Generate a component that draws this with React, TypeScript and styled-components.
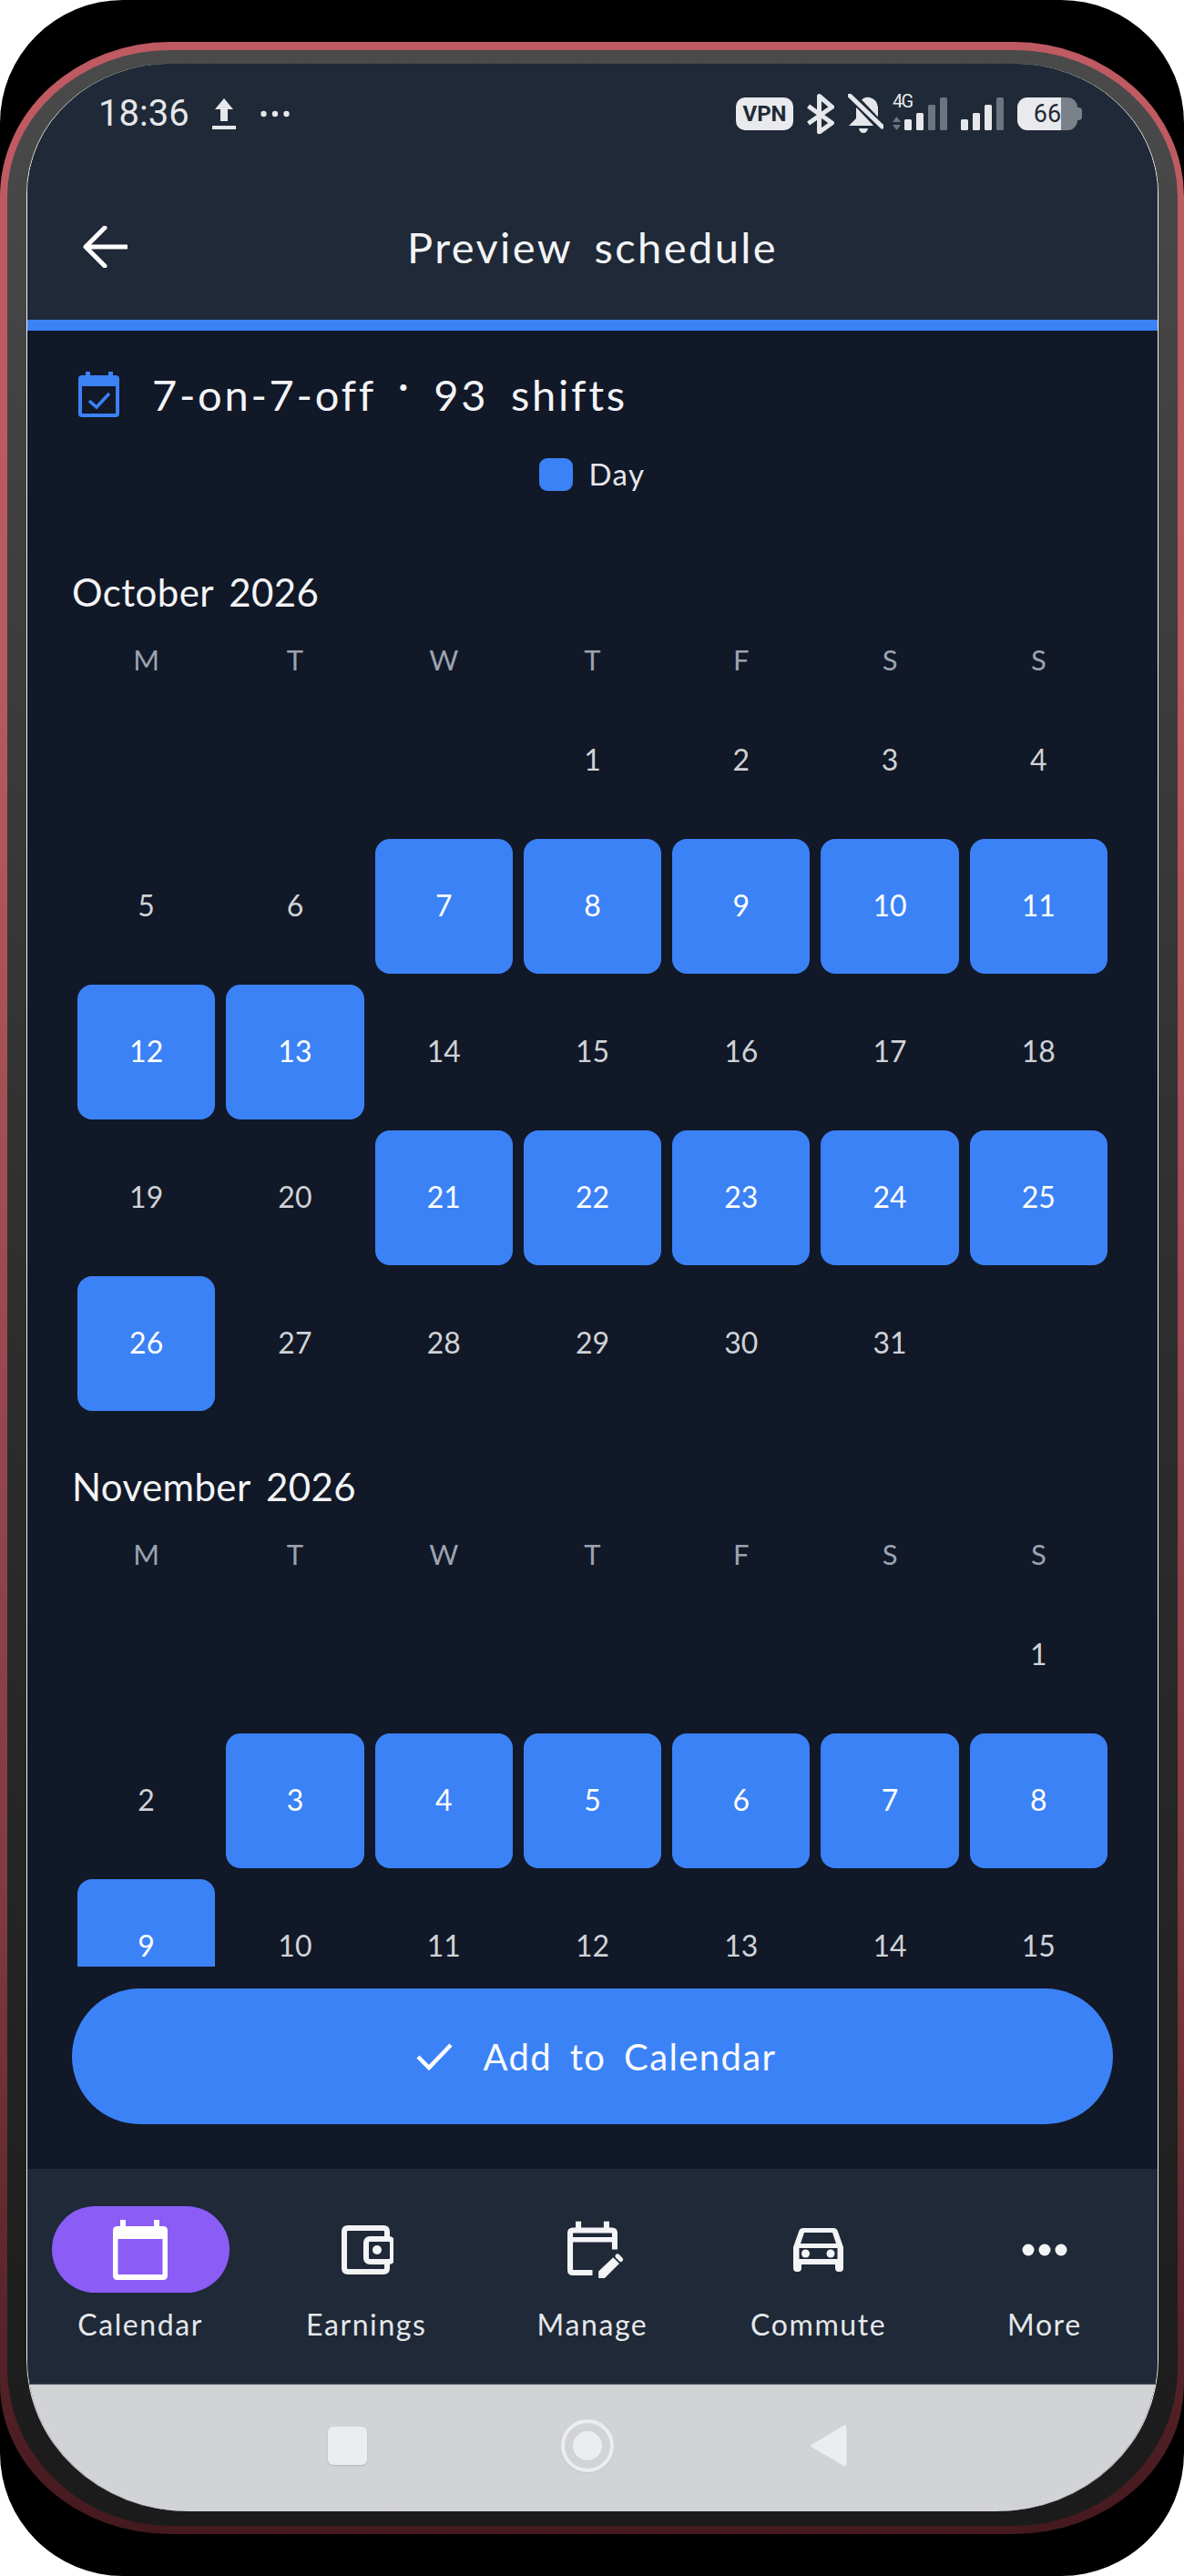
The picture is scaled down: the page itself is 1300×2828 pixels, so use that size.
import React from "react";
import styled, { createGlobalStyle } from "styled-components";

const FONT = `Lato, "Noto Sans", sans-serif`;

const Global = createGlobalStyle`
  html, body { margin: 0; padding: 0; background: #fff; }
  * { box-sizing: border-box; }
`;

const Page = styled.div`
  width: 1300px;
  height: 2828px;
  padding: 46px 0;
  background: #000;
  border-radius: 135px;
  font-family: ${FONT};
`;
const Frame = styled.div`
  height: 2736px;
  padding: 9px 7px 9px 8px;
  background: linear-gradient(180deg, #c05a62 0%, #b85a60 25%, #7f3a40 75%, #44191e 100%);
  border-radius: 187px 187px 187px 187px / 170px 170px 165px 165px;
`;
const Bezel = styled.div`
  height: 100%;
  padding: 15px 22px 16px;
  background: linear-gradient(180deg, #4a4a4a 0%, #2e2e2e 50%, #1b1b1b 100%);
  border-radius: 179px 179px 179px 179px / 161px 161px 173px 173px;
`;
const Screen = styled.div`
  height: 100%;
  display: flex;
  flex-direction: column;
  overflow: hidden;
  background: #111827;
  border-radius: 157px 157px 177px 177px / 143px 143px 167px 167px;
  box-shadow: -1px 0 0 #f2f2f2, 1px 0 0 #f2f2f2;
`;

const Header = styled.header`
  height: 293px;
  flex: none;
  padding-top: 33px;
  background: #1f2937;
  border-bottom: 12px solid #3b82f6;
`;
const StatusBar = styled.div`
  height: 44px;
  padding: 0 83px 0 78px;
  display: flex;
  align-items: center;
  justify-content: space-between;
`;
const StatusLeft = styled.div`
  display: flex;
  align-items: center;
  gap: 27px;
`;
const Time = styled.span`
  width: 98px;
  font-family: Roboto, sans-serif;
  font-size: 40px;
  line-height: 44px;
  color: #e5e7eb;
`;
const StatusRight = styled.div`
  display: flex;
  align-items: center;
  gap: 15px;
`;
const VpnBadge = styled.span`
  width: 63px;
  height: 36px;
  display: flex;
  align-items: center;
  justify-content: center;
  border-radius: 10px;
  background: #e8eaed;
  color: #1f2937;
  font-family: Roboto, sans-serif;
  font-weight: 700;
  font-size: 24px;
`;
const Battery = styled.span`
  position: relative;
  width: 66px;
  height: 36px;
  margin-right: 5px;
  display: flex;
  align-items: center;
  justify-content: center;
  border-radius: 11px;
  background: linear-gradient(90deg, #e8eaed 72%, #7b818b 72%);
  color: #1f2937;
  font-family: Roboto, sans-serif;
  font-size: 27px;
  &::after {
    content: "";
    position: absolute;
    right: -5px;
    top: 11px;
    width: 5px;
    height: 14px;
    border-radius: 0 4px 4px 0;
    background: #7b818b;
  }
`;
const MobileSvg = styled.svg`
  margin-left: -5px;
`;
const Toolbar = styled.div`
  height: 80px;
  margin-top: 84px;
  padding: 0 61px;
  display: grid;
  grid-template-columns: 1fr auto 1fr;
  align-items: center;
`;
const Title = styled.h1`
  margin: 0;
  font-weight: 400;
  font-size: 47px;
  letter-spacing: 2.4px;
  word-spacing: 10px;
  color: #f3f4f6;
`;

const Body = styled.main`
  flex: 1;
  min-height: 0;
  display: flex;
  flex-direction: column;
`;
const Scroll = styled.div`
  height: 1796px;
  flex: none;
  overflow: hidden;
`;
const Summary = styled.div`
  height: 140px;
  padding-left: 56px;
  display: flex;
  align-items: center;
  gap: 36px;
`;
const SummaryText = styled.span`
  padding-bottom: 12px;
  font-size: 47px;
  letter-spacing: 2.7px;
  word-spacing: 10px;
  color: #f3f4f6;
`;
const RaisedDot = styled.span`
  vertical-align: 12px;
`;
const Legend = styled.div`
  height: 36px;
  display: flex;
  align-items: center;
  justify-content: center;
  gap: 17px;
`;
const Swatch = styled.span`
  width: 37px;
  height: 36px;
  border-radius: 9px;
  background: #3b82f6;
`;
const LegendLabel = styled.span`
  padding-bottom: 3px;
  font-size: 33px;
  letter-spacing: 1.5px;
  color: #e5e7eb;
`;
const Month = styled.section<{ $first?: boolean }>`
  margin-top: ${(p) => (p.$first ? 86 : 52)}px;
  padding: 0 49px;
`;
const MonthTitle = styled.h2`
  margin: 0;
  height: 50px;
  line-height: 50px;
  font-weight: 400;
  font-size: 42px;
  letter-spacing: 0.4px;
  word-spacing: 6px;
  color: #f3f4f6;
`;
const WeekRow = styled.div`
  margin-top: 24px;
  height: 50px;
  display: grid;
  grid-template-columns: repeat(7, 1fr);
  align-items: center;
  text-align: center;
  font-size: 31px;
  color: #9ca3af;
`;
const DayGrid = styled.div`
  margin-top: 6px;
  display: grid;
  grid-template-columns: repeat(7, 1fr);
  grid-auto-rows: 160px;
`;
const Day = styled.div<{ $on?: boolean }>`
  margin: 6px;
  padding-bottom: 3px;
  display: flex;
  align-items: center;
  justify-content: center;
  border-radius: 16px;
  font-size: 32px;
  background: ${(p) => (p.$on ? "#3b82f6" : "transparent")};
  color: ${(p) => (p.$on ? "#ffffff" : "#cfd2d6")};
`;

const Footer = styled.div`
  flex: 1;
  padding: 24px 49px 0;
`;
const AddButton = styled.button`
  width: 100%;
  height: 149px;
  padding: 0 0 0 9px;
  border: none;
  border-radius: 75px;
  background: #3b82f6;
  display: flex;
  align-items: center;
  justify-content: center;
  gap: 33px;
  color: #f9fafb;
  font-family: ${FONT};
  font-size: 40px;
  letter-spacing: 1.4px;
  word-spacing: 8px;
`;

const Nav = styled.nav`
  height: 237px;
  flex: none;
  display: grid;
  grid-template-columns: repeat(5, 1fr);
  padding-top: 41px;
  background: #1f2937;
  border-bottom: 1px solid #5b6579;
`;
const Tab = styled.div`
  display: flex;
  flex-direction: column;
  align-items: center;
`;
const TabIcon = styled.div<{ $on?: boolean }>`
  width: 195px;
  height: 95px;
  display: flex;
  align-items: center;
  justify-content: center;
  border-radius: 48px;
  background: ${(p) => (p.$on ? "#8b5cf6" : "transparent")};
`;
const TabLabel = styled.span`
  margin-top: 15px;
  height: 40px;
  line-height: 40px;
  font-size: 32px;
  letter-spacing: 1.6px;
  color: #e5e7eb;
`;

const SysNav = styled.div`
  height: 139px;
  flex: none;
  padding: 0 11px 6px 0;
  display: flex;
  align-items: center;
  justify-content: center;
  background: #d2d3d7;
`;
const SysSlot = styled.div`
  width: 264px;
  display: flex;
  justify-content: center;
`;
const SysSquare = styled.span`
  width: 43px;
  height: 42px;
  border-radius: 6px;
  background: #ecedef;
  box-shadow: 0 1px 2px rgba(0, 0, 0, 0.12);
`;
const SysCircle = styled.span`
  width: 58px;
  height: 58px;
  display: flex;
  align-items: center;
  justify-content: center;
  border-radius: 50%;
  border: 4px solid #ecedef;
  box-shadow: 0 1px 2px rgba(0, 0, 0, 0.08);
  &::before {
    content: "";
    width: 32px;
    height: 32px;
    border-radius: 50%;
    background: #ecedef;
  }
`;

const W = "#e5e7eb";
const G = "#6b7480";

const UploadIcon = () => (
  <svg width="26" height="34" viewBox="0 0 26 34">
    <path d="M13 0 L23 12 H17 V25 H9 V12 H3 Z" fill={W} />
    <rect x="0" y="30" width="26" height="4" fill={W} />
  </svg>
);
const DotsSmall = () => (
  <svg width="32" height="8" viewBox="0 0 32 8">
    <circle cx="3.5" cy="4" r="3.2" fill={W} />
    <circle cx="16" cy="4" r="3.2" fill={W} />
    <circle cx="28.5" cy="4" r="3.2" fill={W} />
  </svg>
);
const BluetoothIcon = () => (
  <svg width="30" height="44" viewBox="0 0 30 44">
    <path d="M1.5 13.5 L27.5 32 L13.5 42 V2.5 L27.5 14.5 L1.5 32.5" fill="none" stroke={W} strokeWidth="5" strokeLinejoin="round" />
  </svg>
);
const BellOffIcon = () => (
  <svg width="39" height="44" viewBox="0 0 39 44">
    <path d="M13 9 Q17 3 24 4 Q32 6 33 15 V27 L38 35 H1 L9 27 V16 Z" fill={W} />
    <path d="M12 38 H22 Q21 43 17 43 Q13 43 12 38 Z" fill={W} />
    <path d="M2 0 L38 38" stroke="#1f2937" strokeWidth="10" />
    <path d="M2 2 L37.5 36" stroke={W} strokeWidth="5" strokeLinecap="round" />
  </svg>
);
const MobileSignal = () => (
  <MobileSvg width="60" height="44" viewBox="0 0 60 44">
    <text x="0" y="15" fontFamily="Roboto, sans-serif" fontSize="20" fill={W} textLength="23">4G</text>
    <path d="M4.5 25 L9 31 H0 Z" fill={G} />
    <path d="M4.5 40 L9 34 H0 Z" fill={G} />
    <rect x="13" y="28" width="8" height="12" rx="1.5" fill={W} />
    <rect x="26" y="21" width="8" height="19" rx="1.5" fill={W} />
    <rect x="39" y="12" width="8" height="28" rx="1.5" fill={G} />
    <rect x="52" y="4" width="8" height="36" rx="1.5" fill={G} />
  </MobileSvg>
);
const SignalBars = () => (
  <svg width="47" height="44" viewBox="0 0 47 44">
    <rect x="0" y="28" width="8" height="12" rx="1.5" fill={W} />
    <rect x="13" y="21" width="8" height="19" rx="1.5" fill={W} />
    <rect x="26" y="12" width="8" height="28" rx="1.5" fill={W} />
    <rect x="39" y="4" width="8" height="36" rx="1.5" fill={G} />
  </svg>
);
const BackArrow = () => (
  <svg width="49" height="46" viewBox="0 0 49 46">
    <path d="M48 23 H4 M24 2 L3 23 L24 44" fill="none" stroke="#fff" strokeWidth="5" strokeLinecap="round" strokeLinejoin="round" />
  </svg>
);
const SummaryCalendar = () => (
  <svg width="45" height="50" viewBox="0 0 45 50">
    <path fillRule="evenodd" fill="#3b82f6" d="M8 0 H13 V4 H33 V0 H38 V4 H41 Q45 4 45 8 V46 Q45 50 41 50 H4 Q0 50 0 46 V8 Q0 4 4 4 H8 Z M4 16 V46 H41 V16 Z" />
    <path d="M12 32 L20 39 L34 24" fill="none" stroke="#3b82f6" strokeWidth="3.5" />
  </svg>
);
const CheckIcon = () => (
  <svg width="40" height="30" viewBox="0 0 40 30">
    <path d="M2 15 L14 27 L38 2" fill="none" stroke="#fff" strokeWidth="4.5" />
  </svg>
);
const CalendarTabIcon = () => (
  <svg width="60" height="66" viewBox="0 0 60 66">
    <path fillRule="evenodd" fill="#fff" d="M8 0 H14 V7 H45 V0 H51 V7 H55 Q60 7 60 12 V61 Q60 66 55 66 H5 Q0 66 0 61 V12 Q0 7 5 7 H8 Z M5.5 21 V60 H54.5 V21 Z" />
  </svg>
);
const WalletIcon = () => (
  <svg width="60" height="56" viewBox="-3 0 60 56">
    <path d="M50 14 V8 Q50 4 46 4 H7 Q3 4 3 8 V48 Q3 52 7 52 H46 Q50 52 50 48 V42" fill="none" stroke="#f3f4f6" strokeWidth="6" />
    <rect x="27" y="16" width="29" height="25" rx="4" fill="none" stroke="#f3f4f6" strokeWidth="6" />
    <circle cx="39" cy="28" r="5" fill="#f3f4f6" />
  </svg>
);
const ManageIcon = () => (
  <svg width="67" height="67" viewBox="50 50 200 200" overflow="visible">
    <path d="M150 226 H86 Q77 226 77 217 V96 Q77 87 86 87 H214 Q223 87 223 96 V150" fill="none" stroke="#f3f4f6" strokeWidth="18" />
    <path d="M77 118 H223" stroke="#f3f4f6" strokeWidth="16" />
    <rect x="95" y="58" width="18" height="24" fill="#f3f4f6" />
    <rect x="187" y="58" width="18" height="24" fill="#f3f4f6" />
    <path d="M170 222 L218 176 L238 196 L190 244 H170 Z" fill="#f3f4f6" />
    <path d="M232 172 L243 183" stroke="#f3f4f6" strokeWidth="15" strokeLinecap="round" />
  </svg>
);
const CarIcon = () => (
  <svg width="55" height="48" viewBox="0 0 55 48">
    <path fillRule="evenodd" fill="#f3f4f6" d="M11 0 H44 Q48 0 49 4 L55 21 V44 Q55 48 51 48 H50 Q46 48 46 44 V40 H9 V44 Q9 48 5 48 H4 Q0 48 0 44 V21 L6 4 Q7 0 11 0 Z M12 5 L8 17 H47 L43 5 Z M6.5 22 V34 H48.5 V22 Z" />
    <circle cx="13.5" cy="28" r="4.5" fill="#f3f4f6" />
    <circle cx="41" cy="28" r="4.5" fill="#f3f4f6" />
  </svg>
);
const MoreIcon = () => (
  <svg width="50" height="14" viewBox="0 0 50 14">
    <circle cx="7" cy="7" r="6.5" fill="#f3f4f6" />
    <circle cx="25" cy="7" r="6.5" fill="#f3f4f6" />
    <circle cx="43" cy="7" r="6.5" fill="#f3f4f6" />
  </svg>
);
const SysBack = () => (
  <svg width="42" height="48" viewBox="0 0 42 48">
    <path d="M2 24 L39 2 Q41 1 41 4 V44 Q41 47 39 46 Z" fill="#ecedef" stroke="#ecedef" strokeLinejoin="round" />
  </svg>
);

const WEEK = ["M", "T", "W", "T", "F", "S", "S"];
const MONTHS = [
  { name: "October 2026", offset: 3, days: 31, on: [7, 8, 9, 10, 11, 12, 13, 21, 22, 23, 24, 25, 26] },
  { name: "November 2026", offset: 6, days: 30, on: [3, 4, 5, 6, 7, 8, 9, 17, 18, 19, 20, 21, 22, 23] },
];
const TABS = [
  { label: "Calendar", icon: <CalendarTabIcon />, on: true },
  { label: "Earnings", icon: <WalletIcon /> },
  { label: "Manage", icon: <ManageIcon /> },
  { label: "Commute", icon: <CarIcon /> },
  { label: "More", icon: <MoreIcon /> },
];

export default function App() {
  return (
    <Page>
      <Global />
      <Frame>
        <Bezel>
          <Screen>
            <Header>
              <StatusBar>
                <StatusLeft>
                  <Time>18:36</Time>
                  <UploadIcon />
                  <DotsSmall />
                </StatusLeft>
                <StatusRight>
                  <VpnBadge>VPN</VpnBadge>
                  <BluetoothIcon />
                  <BellOffIcon />
                  <MobileSignal />
                  <SignalBars />
                  <Battery>66</Battery>
                </StatusRight>
              </StatusBar>
              <Toolbar>
                <BackArrow />
                <Title>Preview schedule</Title>
              </Toolbar>
            </Header>
            <Body>
              <Scroll>
                <Summary>
                  <SummaryCalendar />
                  <SummaryText>
                    7-on-7-off <RaisedDot>·</RaisedDot> 93 shifts
                  </SummaryText>
                </Summary>
                <Legend>
                  <Swatch />
                  <LegendLabel>Day</LegendLabel>
                </Legend>
                {MONTHS.map((m, i) => (
                  <Month key={m.name} $first={i === 0}>
                    <MonthTitle>{m.name}</MonthTitle>
                    <WeekRow>
                      {WEEK.map((d, j) => (
                        <span key={j}>{d}</span>
                      ))}
                    </WeekRow>
                    <DayGrid>
                      {Array.from({ length: m.offset }, (_, j) => (
                        <Day key={`e${j}`} />
                      ))}
                      {Array.from({ length: m.days }, (_, j) => (
                        <Day key={j} $on={m.on.includes(j + 1)}>
                          {j + 1}
                        </Day>
                      ))}
                    </DayGrid>
                  </Month>
                ))}
              </Scroll>
              <Footer>
                <AddButton>
                  <CheckIcon />
                  Add to Calendar
                </AddButton>
              </Footer>
            </Body>
            <Nav>
              {TABS.map((t) => (
                <Tab key={t.label}>
                  <TabIcon $on={t.on}>{t.icon}</TabIcon>
                  <TabLabel>{t.label}</TabLabel>
                </Tab>
              ))}
            </Nav>
            <SysNav>
              <SysSlot>
                <SysSquare />
              </SysSlot>
              <SysSlot>
                <SysCircle />
              </SysSlot>
              <SysSlot>
                <SysBack />
              </SysSlot>
            </SysNav>
          </Screen>
        </Bezel>
      </Frame>
    </Page>
  );
}
